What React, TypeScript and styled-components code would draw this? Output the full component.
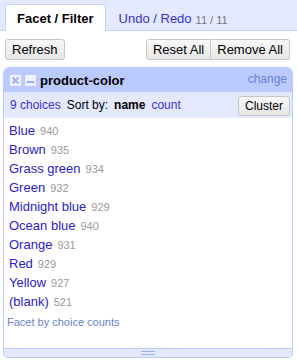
import React from "react";
import styled, { createGlobalStyle } from "styled-components";

const Global = createGlobalStyle`
  html, body { margin: 0; padding: 0; background: #fff; }
  body { font-family: "Liberation Sans", Arial, sans-serif; font-size: 13px; color: #000; }
  * { box-sizing: border-box; }
`;

const Page = styled.div`
  width: 297px;
  height: 364px;
  display: flex;
  flex-direction: column;
`;

const TabBar = styled.div`
  height: 31px;
  background: #e3e9ff;
  border-bottom: 1px solid #c5d2ff;
  display: flex;
  align-items: flex-end;
  padding-left: 5px;
`;

const Tab = styled.div<{ $active?: boolean }>`
  height: 27px;
  margin-bottom: -1px;
  padding: 1px 11px 0 ${(p) => (p.$active ? 11 : 12)}px;
  display: flex;
  align-items: center;
  font-size: 13px;
  background: ${(p) => (p.$active ? "#fff" : "transparent")};
  border: 1px solid ${(p) => (p.$active ? "#c5d2ff" : "transparent")};
  border-bottom: none;
  border-radius: 3px 3px 0 0;
  font-weight: ${(p) => (p.$active ? "bold" : "normal")};
  color: ${(p) => (p.$active ? "#000" : "#3a31cf")};
`;

const TabCount = styled.span`
  color: #777;
  font-size: 11px;
  margin-left: 4px;
  margin-top: 2px;
`;

const Toolbar = styled.div`
  display: flex;
  justify-content: space-between;
  padding: 8px 7px 0 5px;
`;

const ButtonGroup = styled.div`
  display: flex;
`;

const Button = styled.button<{ $joinLeft?: boolean; $joinRight?: boolean }>`
  font-family: "Liberation Sans", Arial, sans-serif;
  font-size: 13px;
  color: #000;
  height: 21px;
  padding: 0 6px;
  background: linear-gradient(#f8f8f8, #e6e6e6);
  border: 1px solid #c6c6c6;
  border-radius: ${(p) =>
    `${p.$joinLeft ? 0 : 3}px ${p.$joinRight ? 0 : 3}px ${p.$joinRight ? 0 : 3}px ${p.$joinLeft ? 0 : 3}px`};
  ${(p) => (p.$joinLeft ? "border-left: none;" : "")}
  line-height: 19px;
`;

const Panel = styled.div`
  margin: 7px 4px 0 3px;
  height: 291px;
  border: 1px solid #bccbff;
  border-radius: 6px 6px 4px 4px;
  display: flex;
  flex-direction: column;
  overflow: hidden;
`;

const Header = styled.div`
  height: 24px;
  background: #bccbff;
  display: flex;
  align-items: center;
  padding: 0 5px 0 6px;
`;

const IconBox = styled.span`
  width: 11px;
  height: 11px;
  background: #f0f3ff;
  display: inline-flex;
  align-items: center;
  justify-content: center;
  margin-right: 4px;
`;

const Title = styled.span`
  font-weight: bold;
  font-size: 13px;
  flex: 1;
`;

const Change = styled.span`
  color: #6a80da;
  font-size: 12px;
  margin-top: -2px;
`;

const Controls = styled.div`
  height: 26px;
  background: #e3e9ff;
  display: flex;
  align-items: center;
  padding: 0 2px 0 6px;
  font-size: 12px;
`;

const LinkText = styled.span<{ $bold?: boolean }>`
  color: ${(p) => (p.$bold ? "#000" : "#3a31cf")};
  font-weight: ${(p) => (p.$bold ? "bold" : "normal")};
  margin-right: 6px;
`;

const Plain = styled.span`
  margin-right: 6px;
`;

const Spacer = styled.span`
  flex: 1;
`;

const SmallButton = styled(Button)`
  height: 20px;
  padding: 0 6px;
  font-size: 12px;
  margin-top: 1px;
`;

const List = styled.div`
  flex: 1;
  padding: 3px 5px 0 5px;
  display: flex;
  flex-direction: column;
`;

const Item = styled.div`
  height: 19px;
  display: flex;
  align-items: center;
  font-size: 13px;
`;

const ItemName = styled.span`
  color: #2b22cc;
`;

const ItemCount = styled.span`
  color: #999;
  font-size: 11px;
  margin-left: 5px;
`;

const FooterLink = styled.div`
  color: #6a80da;
  font-size: 11px;
  margin-top: 5px;
  margin-left: -2px;
`;

const Footer = styled.div`
  height: 9px;
  background: #e3e9ff;
  border-top: 1px solid #bccbff;
  display: flex;
  align-items: center;
  justify-content: center;
`;

const Grip = styled.div`
  width: 14px;
  height: 4px;
  border-top: 1px solid #9aacef;
  border-bottom: 1px solid #9aacef;
`;

const items: [string, number][] = [
  ["Blue", 940],
  ["Brown", 935],
  ["Grass green", 934],
  ["Green", 932],
  ["Midnight blue", 929],
  ["Ocean blue", 940],
  ["Orange", 931],
  ["Red", 929],
  ["Yellow", 927],
  ["(blank)", 521],
];

export default function App() {
  return (
    <Page>
      <Global />
      <TabBar>
        <Tab $active>Facet / Filter</Tab>
        <Tab>
          Undo / Redo<TabCount>11 / 11</TabCount>
        </Tab>
      </TabBar>
      <Toolbar>
        <Button>Refresh</Button>
        <ButtonGroup>
          <Button $joinRight>Reset All</Button>
          <Button $joinLeft>Remove All</Button>
        </ButtonGroup>
      </Toolbar>
      <Panel>
        <Header>
          <IconBox>
            <svg width="9" height="9" viewBox="0 0 9 9">
              <path d="M1.5 1.5 L7.5 7.5 M7.5 1.5 L1.5 7.5" stroke="#9fb0ee" strokeWidth="2" />
            </svg>
          </IconBox>
          <IconBox>
            <svg width="9" height="9" viewBox="0 0 9 9">
              <rect x="0.5" y="5" width="8" height="2" fill="#9fb0ee" />
            </svg>
          </IconBox>
          <Title>product-color</Title>
          <Change>change</Change>
        </Header>
        <Controls>
          <LinkText>9 choices</LinkText>
          <Plain>Sort by:</Plain>
          <LinkText $bold>name</LinkText>
          <LinkText>count</LinkText>
          <Spacer />
          <SmallButton>Cluster</SmallButton>
        </Controls>
        <List>
          {items.map(([n, c]) => (
            <Item key={n}>
              <ItemName>{n}</ItemName>
              <ItemCount>{c}</ItemCount>
            </Item>
          ))}
          <FooterLink>Facet by choice counts</FooterLink>
        </List>
        <Footer>
          <Grip />
        </Footer>
      </Panel>
    </Page>
  );
}
